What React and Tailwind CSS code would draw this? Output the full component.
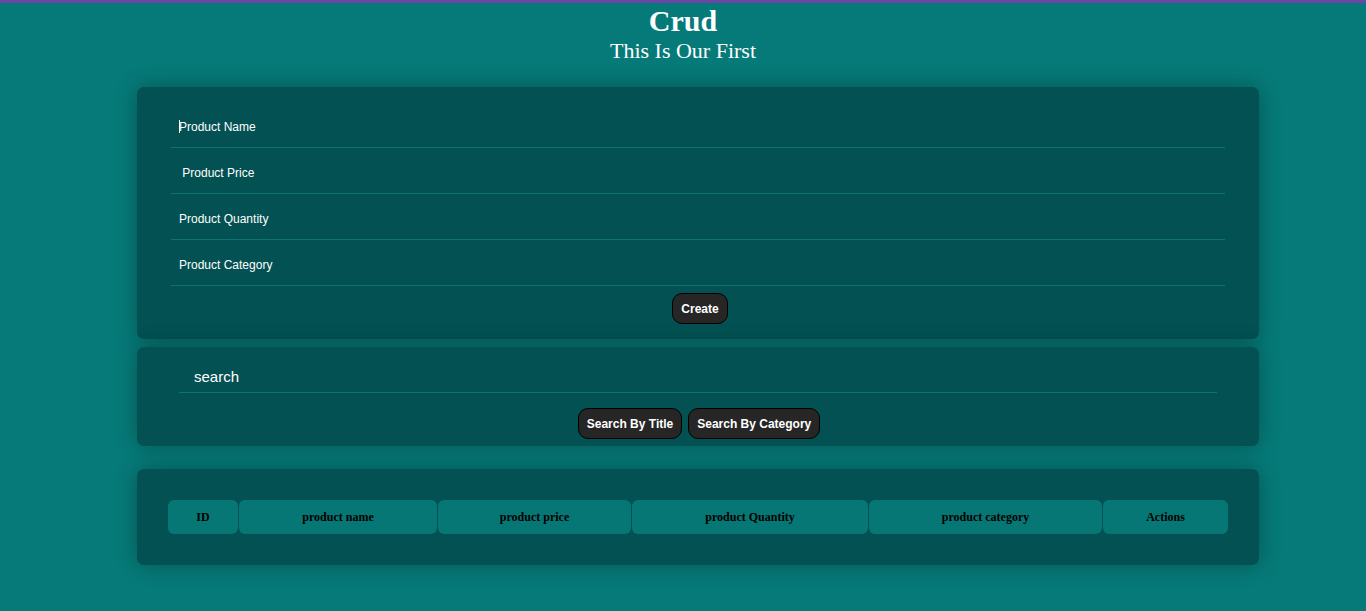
import React from "react";

const fields = ["Product Name", " Product Price", "Product Quantity", "Product Category"];

const columns = [
  { label: "ID", w: "w-[70px]" },
  { label: "product name", w: "w-[198px]" },
  { label: "product price", w: "w-[193px]" },
  { label: "product Quantity", w: "w-[236px]" },
  { label: "product category", w: "w-[233px]" },
  { label: "Actions", w: "w-[125px]" },
];

function DarkButton({ children }) {
  return (
    <button className="h-[31px] px-[8px] rounded-[10px] border border-black bg-[#262626] text-white text-[12px] font-bold font-['Liberation_Sans',Arial,sans-serif]">
      {children}
    </button>
  );
}

export default function App() {
  return (
    <div className="min-h-[611px] bg-[#067a78] border-t-[3px] border-[#6b46a6] font-['Liberation_Serif','Times_New_Roman',serif]">
      <header className="text-center text-white">
        <h1 className="text-[30px] font-bold leading-[36px]">Crud</h1>
        <h2 className="text-[22px] leading-[24px]">This Is Our First</h2>
      </header>

      <main className="ml-[137px] w-[1122px] mt-[24px] pb-[46px]">
        <section className="bg-[#035152] rounded-[7px] shadow-[0_0_22px_rgba(0,0,0,0.3)] pt-[15px] pb-[15px] px-[34px]">
          {fields.map((f, i) => (
            <div
              key={f}
              className="h-[46px] flex items-center border-b border-[#0b7573] pl-[8px] pt-[4px] text-white text-[12px] font-['Liberation_Sans',Arial,sans-serif] whitespace-pre"
            >
              {i === 0 && <span className="w-px h-[13px] bg-white -mr-px" />}
              {f}
            </div>
          ))}
          <div className="flex justify-center mt-[7px] pl-[4px]">
            <DarkButton>Create</DarkButton>
          </div>
        </section>

        <section className="mt-[8px] bg-[#035152] rounded-[7px] shadow-[0_0_22px_rgba(0,0,0,0.3)] pt-[15px] pb-[7px] px-[42px]">
          <div className="h-[31px] flex items-center border-b border-[#0b7573] pl-[15px] text-white text-[15px] font-['Liberation_Sans',Arial,sans-serif]">
            search
          </div>
          <div className="flex justify-center gap-[6px] mt-[15px] pl-[2px]">
            <DarkButton>Search By Title</DarkButton>
            <DarkButton>Search By Category</DarkButton>
          </div>
        </section>

        <section className="mt-[23px] bg-[#035152] rounded-[7px] shadow-[0_0_22px_rgba(0,0,0,0.3)] py-[31px] px-[31px]">
          <div className="flex gap-px">
            {columns.map((c) => (
              <div
                key={c.label}
                className={`${c.w} h-[34px] flex items-center justify-center rounded-[6px] bg-[#067775] text-black text-[12px] font-bold`}
              >
                {c.label}
              </div>
            ))}
          </div>
        </section>
      </main>
    </div>
  );
}
